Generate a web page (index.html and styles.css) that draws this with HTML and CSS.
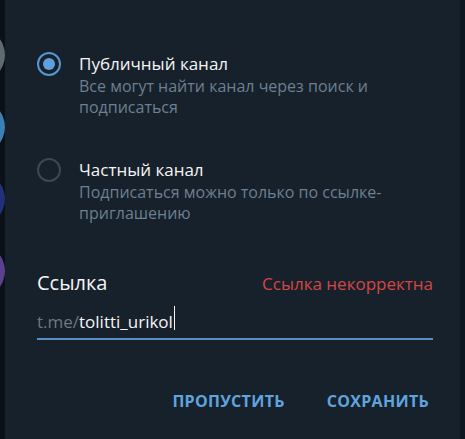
FILE: index.html
```html
<!DOCTYPE html>
<html>
    <head>
        <meta charset="utf-8">
        <title>Тип канала</title>
        <link rel="stylesheet" href="styles.css">
    </head>
    <body>
        <div class="screen">
            <div class="chatlist-left">
                <div class="avatar a1"></div>
                <div class="avatar a2"></div>
                <div class="avatar a3"></div>
                <div class="avatar a4"></div>
            </div>

            <div class="box">
                <div class="options">
                    <label class="option">
                        <span class="radio checked"></span>
                        <span class="option-text">
                            <span class="option-title">Публичный канал</span>
                            <span class="option-about">Все могут найти канал через поиск и подписаться</span>
                        </span>
                    </label>
                    <label class="option">
                        <span class="radio"></span>
                        <span class="option-text">
                            <span class="option-title">Частный канал</span>
                            <span class="option-about">Подписаться можно только по ссылке-приглашению</span>
                        </span>
                    </label>
                </div>

                <div class="link-head">
                    <span class="link-label">Ссылка</span>
                    <span class="link-error">Ссылка некорректна</span>
                </div>
                <div class="link-field">
                    <span class="prefix">t.me/</span><span class="value">tolitti_urikol</span><span class="caret"></span>
                </div>

                <div class="buttons">
                    <button class="btn">Пропустить</button>
                    <button class="btn">Сохранить</button>
                </div>
            </div>

            <div class="chatlist-right"></div>
        </div>
    </body>
</html>
```

FILE: styles.css
```css
html, body {
    height: 100%;
}
body {
    margin: 0;
    background-color: #0e1621;
    font-family: "Open Sans", "Noto Sans", sans-serif;
    overflow: hidden;
}

.screen {
    display: flex;
    height: 100%;
}

/* bits of the chat list peeking out behind the box */
.chatlist-left {
    width: 5px;
    flex: none;
    overflow: hidden;
    background-color: #0b1016;
    display: flex;
    flex-direction: column;
    gap: 18px;
    padding-top: 28px;
}

.avatar {
    flex: none;
    width: 54px;
    height: 54px;
    margin-left: -49px;
    border-radius: 50%;
}
.a1 { background-color: #5d6b70; }
.a2 { background-color: #3c7fb5; }
.a3 { background-color: #21307a; }
.a4 { background-color: #5b4290; }

.chatlist-right {
    flex: 1;
    background-color: #0e1621;
}

.box {
    width: 455px;
    flex: none;
    box-sizing: border-box;
    background-color: #17212b;
    padding: 52px 27px 0 32px;
    color: #f5f5f5;
}

.options {
    display: flex;
    flex-direction: column;
    gap: 40px;
}

.option {
    display: flex;
    align-items: flex-start;
    gap: 18px;
}

.radio {
    flex: none;
    width: 24px;
    height: 24px;
    box-sizing: border-box;
    border: 2px solid #3e4853;
    border-radius: 50%;
    display: flex;
    align-items: center;
    justify-content: center;
}
.radio.checked {
    border-color: #5a95cf;
}
.radio.checked:after {
    content: "";
    width: 12px;
    height: 12px;
    border-radius: 50%;
    background-color: #5e9fdd;
}

.option-text {
    flex: 1;
    display: flex;
    flex-direction: column;
}
.option-title {
    font-size: 17px;
    line-height: 23px;
}
.option-about {
    font-size: 16px;
    line-height: 21px;
    margin-top: 1px;
    color: #6d7f91;
}

.link-head {
    display: flex;
    justify-content: space-between;
    align-items: baseline;
    margin-top: 45px;
}
.link-label {
    font-size: 20px;
    line-height: 27px;
}
.link-error {
    font-size: 17px;
    color: #d64545;
}

.link-field {
    margin-top: 14px;
    font-size: 17px;
    line-height: 23px;
    padding-bottom: 5px;
    border-bottom: 2px solid #5a8fc6;
    display: flex;
    align-items: center;
}
.prefix {
    color: #6d7883;
}
.caret {
    align-self: flex-start;
    width: 1px;
    height: 24px;
    margin: -4px 0 0 1px;
    background-color: #f5f5f5;
}

.buttons {
    display: flex;
    justify-content: flex-end;
    gap: 34px;
    margin-top: 46px;
}
.btn {
    font-family: inherit;
    font-size: 16px;
    font-weight: 700;
    letter-spacing: 0.3px;
    text-transform: uppercase;
    color: #5fa4df;
    background: none;
    border: 0;
    padding: 4px 4px;
    cursor: pointer;
}
```
